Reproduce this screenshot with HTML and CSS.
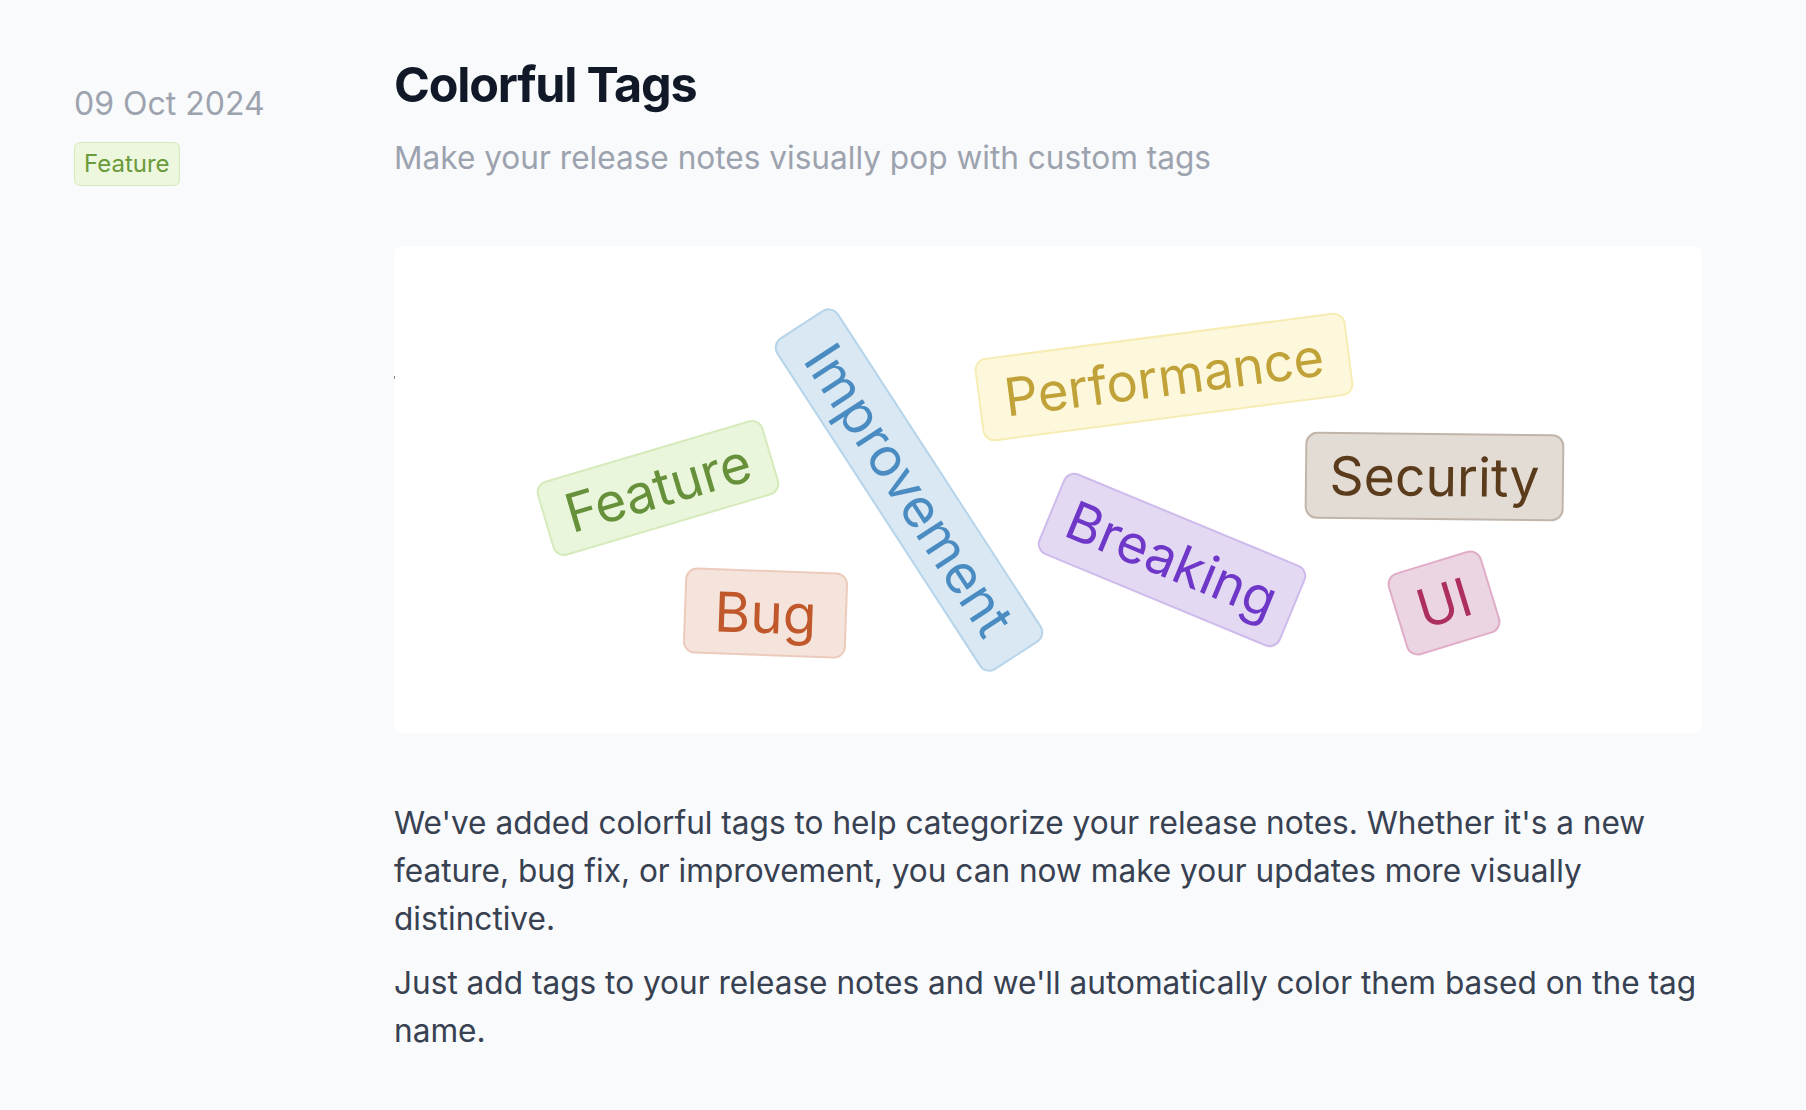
FILE: index.html
```html
<!DOCTYPE html>
<html lang="en">
<head>
<meta charset="utf-8">
<title>Colorful Tags</title>
<link rel="stylesheet" href="styles.css">
</head>
<body>
<article class="entry">
  <aside class="meta">
    <div class="date">09 Oct 2024</div>
    <span class="badge">Feature</span>
  </aside>
  <main class="content">
    <h1 class="title">Colorful Tags</h1>
    <p class="subtitle">Make your release notes visually pop with custom tags</p>
    <div class="hero">
      <span class="tag t-feature">Feature</span>
      <span class="tag t-bug">Bug</span>
      <span class="tag t-improvement">Improvement</span>
      <span class="tag t-performance">Performance</span>
      <span class="tag t-breaking">Breaking</span>
      <span class="tag t-security">Security</span>
      <span class="tag t-ui">UI</span>
    </div>
    <div class="body">
      <p>We've added colorful tags to help categorize your release notes. Whether it's a new feature, bug fix, or improvement, you can now make your updates more visually distinctive.</p>
      <p>Just add tags to your release notes and we'll automatically color them based on the tag name.</p>
    </div>
  </main>
</article>
</body>
</html>
```
FILE: styles.css
```css
* { box-sizing: border-box; }
html, body { margin: 0; padding: 0; }
body {
  background: #f9fafb;
  font-family: "Inter", "Noto Sans", "Liberation Sans", sans-serif;
  min-height: 1110px;
}
.entry {
  display: flex;
  padding: 56px 0 0 74px;
}
.meta {
  width: 320px;
  flex: none;
  padding-top: 24px;
  display: flex;
  flex-direction: column;
  align-items: flex-start;
  gap: 14px;
}
.date {
  font-size: 32px;
  line-height: 48px;
  color: #9ca3af;
}
.badge {
  font-size: 24px;
  line-height: 32px;
  padding: 5px 9px;
  border: 1px solid #d6ebbd;
  background: #ecf7de;
  color: #6a9a3a;
  border-radius: 6px;
}
.content {
  width: 1308px;
  flex: none;
}
.title {
  margin: 0;
  font-size: 48.5px;
  line-height: 58px;
  font-weight: 700;
  color: #111827;
  letter-spacing: -0.025em;
}
.subtitle {
  margin: 20px 0 0;
  font-size: 31.6px;
  line-height: 48px;
  color: #9ca3af;
}
.hero {
  position: relative;
  margin-top: 64px;
  height: 487px;
  background: #ffffff;
  border-radius: 8px;
  overflow: hidden;
}
.hero::before {
  content: "";
  position: absolute;
  left: 0;
  top: 130px;
  width: 1px;
  height: 3px;
  background: #8a8f98;
}
.body {
  margin-top: 66px;
  font-size: 31.6px;
  line-height: 48px;
  color: #374151;
}
.body p { margin: 0 0 16px; }

.tag {
  position: absolute;
  display: flex;
  align-items: center;
  justify-content: center;
  border: 2px solid;
  border-radius: 12px;
  white-space: nowrap;
  font-weight: 400;
  line-height: 1;
  font-size: 53.5px;
  transform-origin: 50% 50%;
}
.t-feature {
  left: 146px; top: 203px; width: 236px; height: 78px;
  transform: rotate(-16.5deg);
  background: #eaf6dc; border-color: #d6ebbc; color: #67903a;
}
.t-bug {
  left: 290px; top: 324px; width: 163px; height: 86px;
  transform: rotate(2deg);
  font-size: 55px;
  background: #f4e4dc; border-color: #eccbbd; color: #c0582b;
}
.t-improvement {
  left: 317px; top: 207px; width: 396px; height: 74px;
  transform: rotate(57deg);
  font-size: 54px;
  background: #d9e8f3; border-color: #b6d4ea; color: #4a8cc2;
}
.t-performance {
  left: 583px; top: 89px; width: 374px; height: 84px;
  transform: rotate(-7.4deg);
  font-size: 52.5px;
  background: #fdf8dc; border-color: #f6ecb4; color: #c0a238;
}
.t-breaking {
  left: 647px; top: 270px; width: 262px; height: 88px;
  transform: rotate(22.5deg);
  background: #e4d9f3; border-color: #cfbaec; color: #6e37c8;
}
.t-security {
  left: 911px; top: 187px; width: 259px; height: 87px;
  transform: rotate(0.6deg);
  background: #e3dcd5; border-color: #c1b5aa; color: #5a3b1b;
}
.t-ui {
  left: 1001px; top: 314px; width: 98px; height: 86px;
  transform: rotate(-17deg);
  background: #ecd5e3; border-color: #e0adc9; color: #ad2f60;
}
```
